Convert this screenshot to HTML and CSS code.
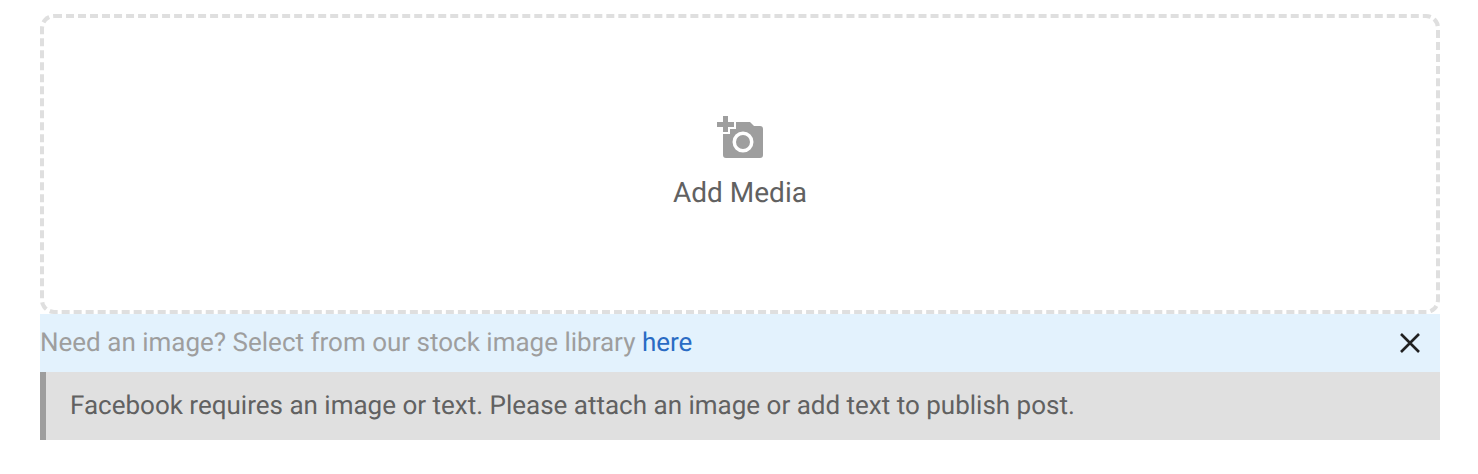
FILE: index.html
```html
<!DOCTYPE html>
<html lang="en">
<head>
    <meta charset="UTF-8">
    <title>Add Media</title>
    <link rel="stylesheet" href="styles.css">
</head>
<body>
    <div class="container">
        <div class="dropzone">
            <svg class="media-icon" width="47" height="43" viewBox="0 0 47 43">
                <path class="camera" fill-rule="evenodd" d="M6 18V39a3 3 0 0 0 3 3H43a3 3 0 0 0 3-3V13a3 3 0 0 0-3-3H37L33 6H19V13H13V18z M26 15.500a10.500 10.500 0 1 0 0 21a10.500 10.500 0 1 0 0-21z M26 19a7 7 0 1 1 0 14a7 7 0 1 1 0-14z"/>
                <path class="camera" d="M6 0h5v6h6v5h-6v5H6v-5H0V6h6z"/>
            </svg>
            <span class="media-label">Add Media</span>
        </div>
        <div class="stock-bar">
            <span>Need an image? Select from our stock image library <a href="#">here</a></span>
            <button class="close-button" aria-label="Close">
                <svg width="22" height="22" viewBox="0 0 22 22"><path d="M2 2L20 20M20 2L2 20"/></svg>
            </button>
        </div>
        <div class="notice">Facebook requires an image or text. Please attach an image or add text to publish post.</div>
    </div>
</body>
</html>
```

FILE: styles.css
```css
body {
    font-family: Roboto, "Liberation Sans", sans-serif;
    text-rendering: geometricPrecision;
    margin: 0;
    background: #ffffff;
}

.container {
    padding: 14px 38px 34px 40px;
}

.dropzone {
    height: 300px;
    box-sizing: border-box;
    border: 4px dashed #dfdfdf;
    border-radius: 14px;
    display: flex;
    flex-direction: column;
    align-items: center;
    justify-content: center;
    padding-bottom: 2px;
}

.media-icon {
    display: block;
    margin-bottom: 16px;
}

.camera {
    fill: #9e9e9e;
}

.media-label {
    font-size: 28px;
    line-height: 36px;
    color: #616161;
}

.stock-bar {
    height: 58px;
    background: #e3f2fd;
    display: flex;
    align-items: center;
    justify-content: space-between;
    font-size: 26px;
    color: #9e9e9e;
}

.stock-bar a {
    color: #2a6bc4;
    text-decoration: none;
}

.close-button {
    background: none;
    border: none;
    padding: 0;
    margin-right: 19px;
    width: 22px;
    height: 22px;
    cursor: pointer;
}

.close-button svg {
    display: block;
}

.close-button path {
    stroke: #212121;
    stroke-width: 2.6;
    fill: none;
}

.notice {
    height: 68px;
    box-sizing: border-box;
    background: #e0e0e0;
    border-left: 6px solid #9e9e9e;
    padding-left: 24px;
    display: flex;
    align-items: center;
    font-size: 26px;
    color: #616161;
}
```
